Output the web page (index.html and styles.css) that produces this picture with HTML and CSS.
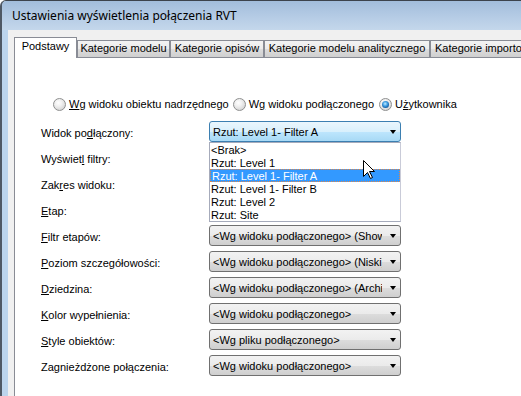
FILE: index.html
```html
<!DOCTYPE html>
<html lang="pl">
<head>
<meta charset="utf-8">
<title>Ustawienia wyświetlenia połączenia RVT</title>
<link rel="stylesheet" href="styles.css">
</head>
<body>
<div class="window">
  <div class="titlebar"><span class="title">Ustawienia wyświetlenia połączenia RVT</span></div>
  <div class="frame">
    <div class="client">
      <div class="tabs">
        <div class="tab tab-active tab-w1">Podstawy</div>
        <div class="tab tab-w2">Kategorie modelu</div>
        <div class="tab tab-w3">Kategorie opisów</div>
        <div class="tab tab-w4">Kategorie modelu analitycznego</div>
        <div class="tab tab-w5">Kategorie importowanych</div>
      </div>
      <div class="panel">
        <div class="radios">
          <div class="radio radio-1"><span class="radio-dot"></span><span><u>W</u>g widoku obiektu nadrzędnego</span></div>
          <div class="radio radio-2"><span class="radio-dot"></span><span>W<u>g</u> widoku podłączonego</span></div>
          <div class="radio"><span class="radio-dot checked"></span><span>U<u>ż</u>ytkownika</span></div>
        </div>
        <div class="form">
          <div class="label">Widok po<u>d</u>łączony:</div>
          <div class="field">
            <div class="combo combo-open"><span class="combo-text">Rzut: Level 1- Filter A</span><span class="arrow"></span></div>
            <ul class="list">
              <li class="item">&lt;Brak&gt;</li>
              <li class="item">Rzut: Level 1</li>
              <li class="item item-selected">Rzut: Level 1- Filter A</li>
              <li class="item">Rzut: Level 1- Filter B</li>
              <li class="item">Rzut: Level 2</li>
              <li class="item">Rzut: Site</li>
            </ul>
          </div>

          <div class="label">Wyświet<u>l</u> filtry:</div>
          <div class="field"></div>

          <div class="label">Zak<u>r</u>es widoku:</div>
          <div class="field"></div>

          <div class="label"><u>E</u>tap:</div>
          <div class="field"></div>

          <div class="label"><u>F</u>iltr etapów:</div>
          <div class="field"><div class="combo"><span class="combo-text">&lt;Wg widoku podłączonego&gt; (Show all)</span><span class="arrow"></span></div></div>

          <div class="label"><u>P</u>oziom szczegółowości:</div>
          <div class="field"><div class="combo"><span class="combo-text">&lt;Wg widoku podłączonego&gt; (Niski);</span><span class="arrow"></span></div></div>

          <div class="label"><u>D</u>ziedzina:</div>
          <div class="field"><div class="combo"><span class="combo-text">&lt;Wg widoku podłączonego&gt; (Architektura)</span><span class="arrow"></span></div></div>

          <div class="label"><u>K</u>olor wypełnienia:</div>
          <div class="field"><div class="combo"><span class="combo-text">&lt;Wg widoku podłączonego&gt;</span><span class="arrow"></span></div></div>

          <div class="label"><u>S</u>tyle obiektów:</div>
          <div class="field"><div class="combo"><span class="combo-text">&lt;Wg pliku podłączonego&gt;</span><span class="arrow"></span></div></div>

          <div class="label">Za<u>g</u>nieżdżone połączenia:</div>
          <div class="field"><div class="combo"><span class="combo-text">&lt;Wg widoku podłączonego&gt;</span><span class="arrow"></span></div></div>
        </div>
      </div>
    </div>
  </div>
</div>
<svg class="cursor" width="13" height="20" viewBox="0 0 13 20" aria-hidden="true">
  <path d="M0.5 0.5 V16.5 L4.5 12.5 L7.5 18.5 L9.5 17.5 L6.5 11.5 H11.5 Z" fill="#fff" stroke="#000" stroke-width="1" stroke-linejoin="miter"/>
</svg>
</body>
</html>
```
FILE: styles.css
```css
html, body {
  margin: 0;
  padding: 0;
}
body {
  position: relative;
  width: 521px;
  height: 396px;
  overflow: hidden;
  background: #fff;
  font-family: "Liberation Sans", Arial, sans-serif;
  font-size: 11px;
  color: #000;
}
.window {
  box-sizing: border-box;
  height: 396px;
  display: flex;
  flex-direction: column;
  border-top: 1px solid #3c434c;
  border-left: 2px solid #4f5864;
  border-top-left-radius: 6px;
  background: #bcd4ec;
  overflow: hidden;
}
.titlebar {
  flex: 0 0 29px;
  display: flex;
  align-items: center;
  padding-left: 10px;
  background: linear-gradient(#a2bddb, #b7cde6 60%, #c4d7eb);
  font-family: "Noto Sans", "Liberation Sans", sans-serif;
  font-size: 12px;
  color: #000;
}
.frame {
  flex: 1;
  display: flex;
  padding-left: 6px;
}
.client {
  flex: 1;
  display: flex;
  flex-direction: column;
  background: #f0f0f0;
  padding: 7px 0 0 6px;
}
.tabs {
  position: relative;
  z-index: 1;
  display: flex;
  align-items: flex-end;
  height: 21px;
  margin-bottom: -1px;
  white-space: nowrap;
}
.tab {
  box-sizing: border-box;
  flex: 0 0 auto;
  height: 17px;
  margin-bottom: 1px;
  padding-top: 1px;
  line-height: 13px;
  text-align: center;
  overflow: hidden;
  border: 1px solid #898c95;
  border-bottom: none;
  background: linear-gradient(#f3f3f3, #ebebeb 50%, #dddddd 51%, #cfcfcf);
}
.tab-active {
  height: 21px;
  margin-bottom: 0;
  padding-top: 2px;
  background: #fff;
}
.tab-w1 { width: 63px; }
.tab-w2 { width: 93px; }
.tab-w3 { width: 94px; }
.tab-w4 { width: 166px; }
.tab-w5 { width: 110px; text-align: left; padding-left: 4px; }
.panel {
  flex: 1;
  background: #fff;
  border-top: 1px solid #898c95;
  border-left: 1px solid #898c95;
}
.radios {
  display: flex;
  align-items: center;
  height: 13px;
  margin-top: 40px;
  padding-left: 38px;
  white-space: nowrap;
}
.radio {
  display: flex;
  align-items: center;
  line-height: 13px;
}
.radio-1 { margin-right: 4px; }
.radio-2 { margin-right: 5px; }
.radio-dot {
  position: relative;
  box-sizing: border-box;
  width: 13px;
  height: 13px;
  margin-right: 3px;
  border-radius: 50%;
  border: 1px solid #8e8f8f;
  background: radial-gradient(circle at 40% 35%, #ffffff 0, #f0f0f0 35%, #d4d4d4 80%, #c8c8c8 100%);
}
.radio-dot.checked::after {
  content: "";
  position: absolute;
  left: 2px;
  top: 2px;
  width: 7px;
  height: 7px;
  border-radius: 50%;
  background: radial-gradient(circle at 45% 40%, #c6ecff 0, #4aa7e8 35%, #1460a8 70%, #0d3f78 100%);
}
.form {
  display: grid;
  grid-template-columns: 168px 192px;
  grid-auto-rows: 21px;
  row-gap: 5px;
  margin-top: 10px;
  padding-left: 26px;
}
.label {
  align-self: center;
  padding-top: 4px;
  line-height: 13px;
  white-space: nowrap;
}
.field {
  position: relative;
}
.combo {
  box-sizing: border-box;
  height: 21px;
  display: flex;
  align-items: center;
  padding: 1px 4px 0 3px;
  border: 1px solid #707070;
  border-radius: 3px;
  background: linear-gradient(#f2f2f2, #ebebeb 50%, #dddddd 51%, #cfcfcf);
}
.combo-open {
  border-color: #3c7fb1;
  background: linear-gradient(#eaf6fd, #d9f0fc 50%, #bee6fd 51%, #a7d9f5);
}
.combo-text {
  flex: 1;
  overflow: hidden;
  white-space: nowrap;
  line-height: 13px;
  margin-right: 8px;
}
.arrow {
  flex: 0 0 auto;
  width: 0;
  height: 0;
  border-top: 4px solid #000;
  border-left: 3.5px solid transparent;
  border-right: 3.5px solid transparent;
}
.list {
  position: absolute;
  left: 0;
  top: 21px;
  box-sizing: border-box;
  width: 192px;
  height: 80px;
  margin: 0;
  padding: 0;
  list-style: none;
  background: #fff;
  border: 1px solid #a6abbb;
  border-right-color: #c9cbd8;
}
.item {
  box-sizing: border-box;
  height: 13px;
  padding: 1px 0 0 1px;
  line-height: 12px;
  white-space: nowrap;
}
.item-selected {
  background: #3399ff;
  color: #fff;
  border: 1px dotted #e0874a;
  padding: 0 0 0 1px;
  line-height: 12px;
}
.cursor {
  position: absolute;
  left: 363px;
  top: 160px;
}
```
